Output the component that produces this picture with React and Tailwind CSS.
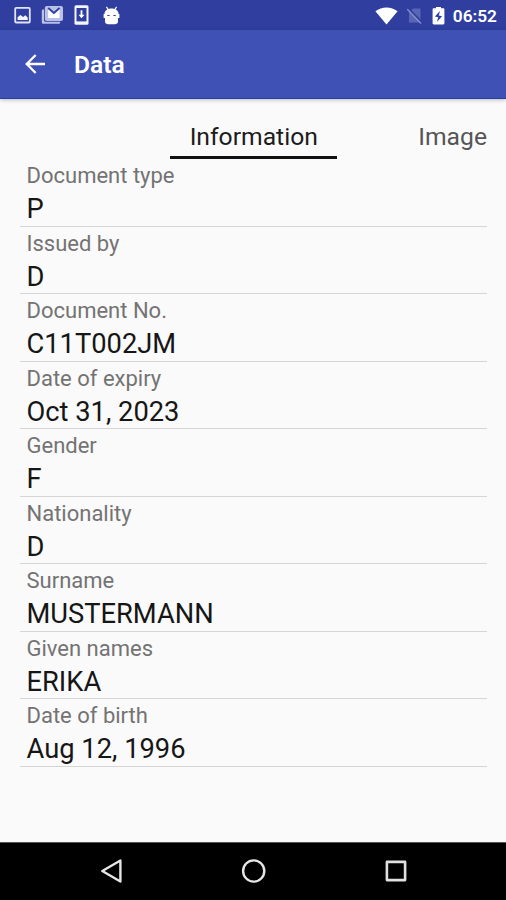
import React from 'react'

const fields = [
  { label: 'Document type', value: 'P' },
  { label: 'Issued by', value: 'D' },
  { label: 'Document No.', value: 'C11T002JM' },
  { label: 'Date of expiry', value: 'Oct 31, 2023' },
  { label: 'Gender', value: 'F' },
  { label: 'Nationality', value: 'D' },
  { label: 'Surname', value: 'MUSTERMANN' },
  { label: 'Given names', value: 'ERIKA' },
  { label: 'Date of birth', value: 'Aug 12, 1996' },
]

function StatusBar() {
  return (
    <div className="flex h-[30px] items-center justify-between bg-[#303f9f] pl-[14px] pr-[9px] text-white">
      {/* Notifications */}
      <div className="flex items-center">
        <svg className="h-[18px] w-[17px]" viewBox="0 0 17 18" fill="none">
          <rect x="1.200" y="1.900" width="14.600" height="14.600" rx="1" stroke="#dfe3f7" strokeWidth="1.800" />
          <path d="M3.600 14v-2.700l2.800-2.400 2.700 2 2.200-1.600 2.400 2.200V14z" fill="#f4f5fc" />
        </svg>
        <svg className="ml-[10px] h-5 w-[23px]" viewBox="0 0 23 20">
          <path d="M3 4.500H2.200C1.300 4.500.8 5 .8 6v11.200c0 1 .6 1.600 1.600 1.600h15.200c1 0 1.600-.5 1.600-1.500v-.5H5.200C3.600 16.800 3 16 3 14.500z" fill="#b9c1e6" />
          <rect x="3.800" y="1" width="18.200" height="15" rx="2" fill="#b9c1e6" />
          <path d="M7.200 3.300 12.900 8l5.700-4.700V13H7.200z" fill="#fff" />
          <path d="m7.200 3 5.700 4.900L18.600 3" fill="none" stroke="#303f9f" strokeWidth="1.900" />
        </svg>
        <svg className="ml-[10px] h-5 w-[15px]" viewBox="0 0 15 20">
          <rect x=".5" y=".2" width="14" height="19.600" rx="1.500" fill="#f4f5fc" />
          <rect x="2.500" y="3" width="10" height="13.400" fill="#303f9f" />
          <path d="M6.600 5.200h1.800v4.600h2.100l-3 3.500-3-3.500h2.100z" fill="#fff" />
        </svg>
        <svg className="ml-[14px] h-[19px] w-[17px]" viewBox="0 0 17 19" fill="#fff">
          <path d="M1.400 8.300C1.400 4.700 4.700 2.600 8.500 2.600s7.100 2.100 7.100 5.700z" />
          <path d="m3.400.8 2 3M13.600.8l-2 3" stroke="#fff" strokeWidth="1.200" />
          <path d="M.6 8h15.800v4H15v3.400c0 1.800-1.500 2.800-3.300 2.800H5.300C3.500 18.200 2 17.200 2 15.400V12H.6z" />
          <path d="M4.300 9.500h2.300M10.400 9.500h2.300" stroke="#303f9f" strokeWidth="1.200" />
        </svg>
      </div>

      {/* System icons */}
      <div className="flex items-center pt-px">
        <svg className="h-[18px] w-[23px]" viewBox="0 0 23 18">
          <path d="M.4 4.300C6.800-.8 16.200-.8 22.600 4.300L11.500 17.400z" fill="#fff" />
        </svg>
        <svg className="ml-[8px] h-[18px] w-[17px]" viewBox="0 0 17 18">
          <path d="M7 1.500h7.500v14H3V5.500z" fill="#5966b5" />
          <path d="m2 1.500 14 14" stroke="#303f9f" strokeWidth="2.400" />
          <path d="m1.300 2.300 13.700 14.200" stroke="#8791cd" strokeWidth="1.400" />
        </svg>
        <svg className="ml-[9px] h-5 w-[13px]" viewBox="0 0 13 20">
          <path d="M4 2.200V1h5v1.200h2.200c.7 0 1.200.5 1.200 1.200v13.900c0 .7-.5 1.200-1.200 1.200H1.800c-.7 0-1.200-.5-1.200-1.200V3.400c0-.7.500-1.200 1.200-1.200z" fill="#fff" />
          <path d="M8 5 2.900 10.400l3.300.8L4.900 16l5.200-5.800-3.300-.8z" fill="#303f9f" />
        </svg>
        <span className="ml-2 pt-[2px] text-[17.300px] leading-none font-semibold">06:52</span>
      </div>
    </div>
  )
}

function AppBar() {
  return (
    <div className="flex h-[69px] items-center border-b border-[#2440a6] bg-[#3f51b5] pl-[25px] text-white shadow-[0_1px_4px_rgba(0,0,0,0.25)]">
      <svg className="h-5 w-5" viewBox="0 0 20 20" fill="none" stroke="#fff" strokeWidth="2.300">
        <path d="M20 10H1.800M10.700 1 1.700 10l9 9" />
      </svg>
      <h1 className="ml-[29px] pt-[3px] text-[24.600px] font-semibold">Data</h1>
    </div>
  )
}

function Tabs() {
  return (
    <div className="flex h-[60px] items-end justify-end pr-[19px] text-[24.700px]">
      <div className="mr-[81px] h-[43px] w-[167px] border-b-[3px] border-[#111] pt-[2px] text-center leading-[38px] text-[#1c1c1c]">
        Information
      </div>
      <div className="h-[43px] pt-[2px] leading-[38px] text-[#555]">Image</div>
    </div>
  )
}

function NavBar() {
  return (
    <nav className="flex h-[58px] items-center border-t border-[#555] bg-black pb-[2px] pl-[100px]">
      <svg className="h-[26px] w-[24px]" viewBox="0 0 24 26" fill="none" stroke="#e6e6e6" strokeWidth="2.400" strokeLinejoin="round">
        <path d="M20.400 2.500v21L2.300 13z" />
      </svg>
      <svg className="ml-[117px] h-[26px] w-[26px]" viewBox="0 0 26 26" fill="none" stroke="#e6e6e6" strokeWidth="2.400">
        <circle cx="12.700" cy="13" r="10.600" />
      </svg>
      <svg className="ml-[116px] h-[26px] w-[26px]" viewBox="0 0 26 26" fill="none" stroke="#e0e0e0" strokeWidth="2.600" strokeLinejoin="round">
        <path d="M3.900 3.900h18.200v18.200H3.900z" />
      </svg>
    </nav>
  )
}

function App() {
  return (
    <div className="flex h-[900px] w-[506px] flex-col bg-[#fafafa] font-['Roboto',sans-serif]">
      <header>
        <StatusBar />
        <AppBar />
      </header>
      <Tabs />
      <main className="flex-1 pl-5 pr-[19px]">
        {fields.map((f) => (
          <div key={f.label} className="h-[67.500px] border-b border-[#d5d5d5] pt-[3px] pl-[6.500px]">
            <div className="text-[22px] leading-[28px] text-[#737373]">{f.label}</div>
            <div className="text-[27.300px] leading-[38px] text-[#161616]">{f.value}</div>
          </div>
        ))}
      </main>
      <NavBar />
    </div>
  )
}

export default App
